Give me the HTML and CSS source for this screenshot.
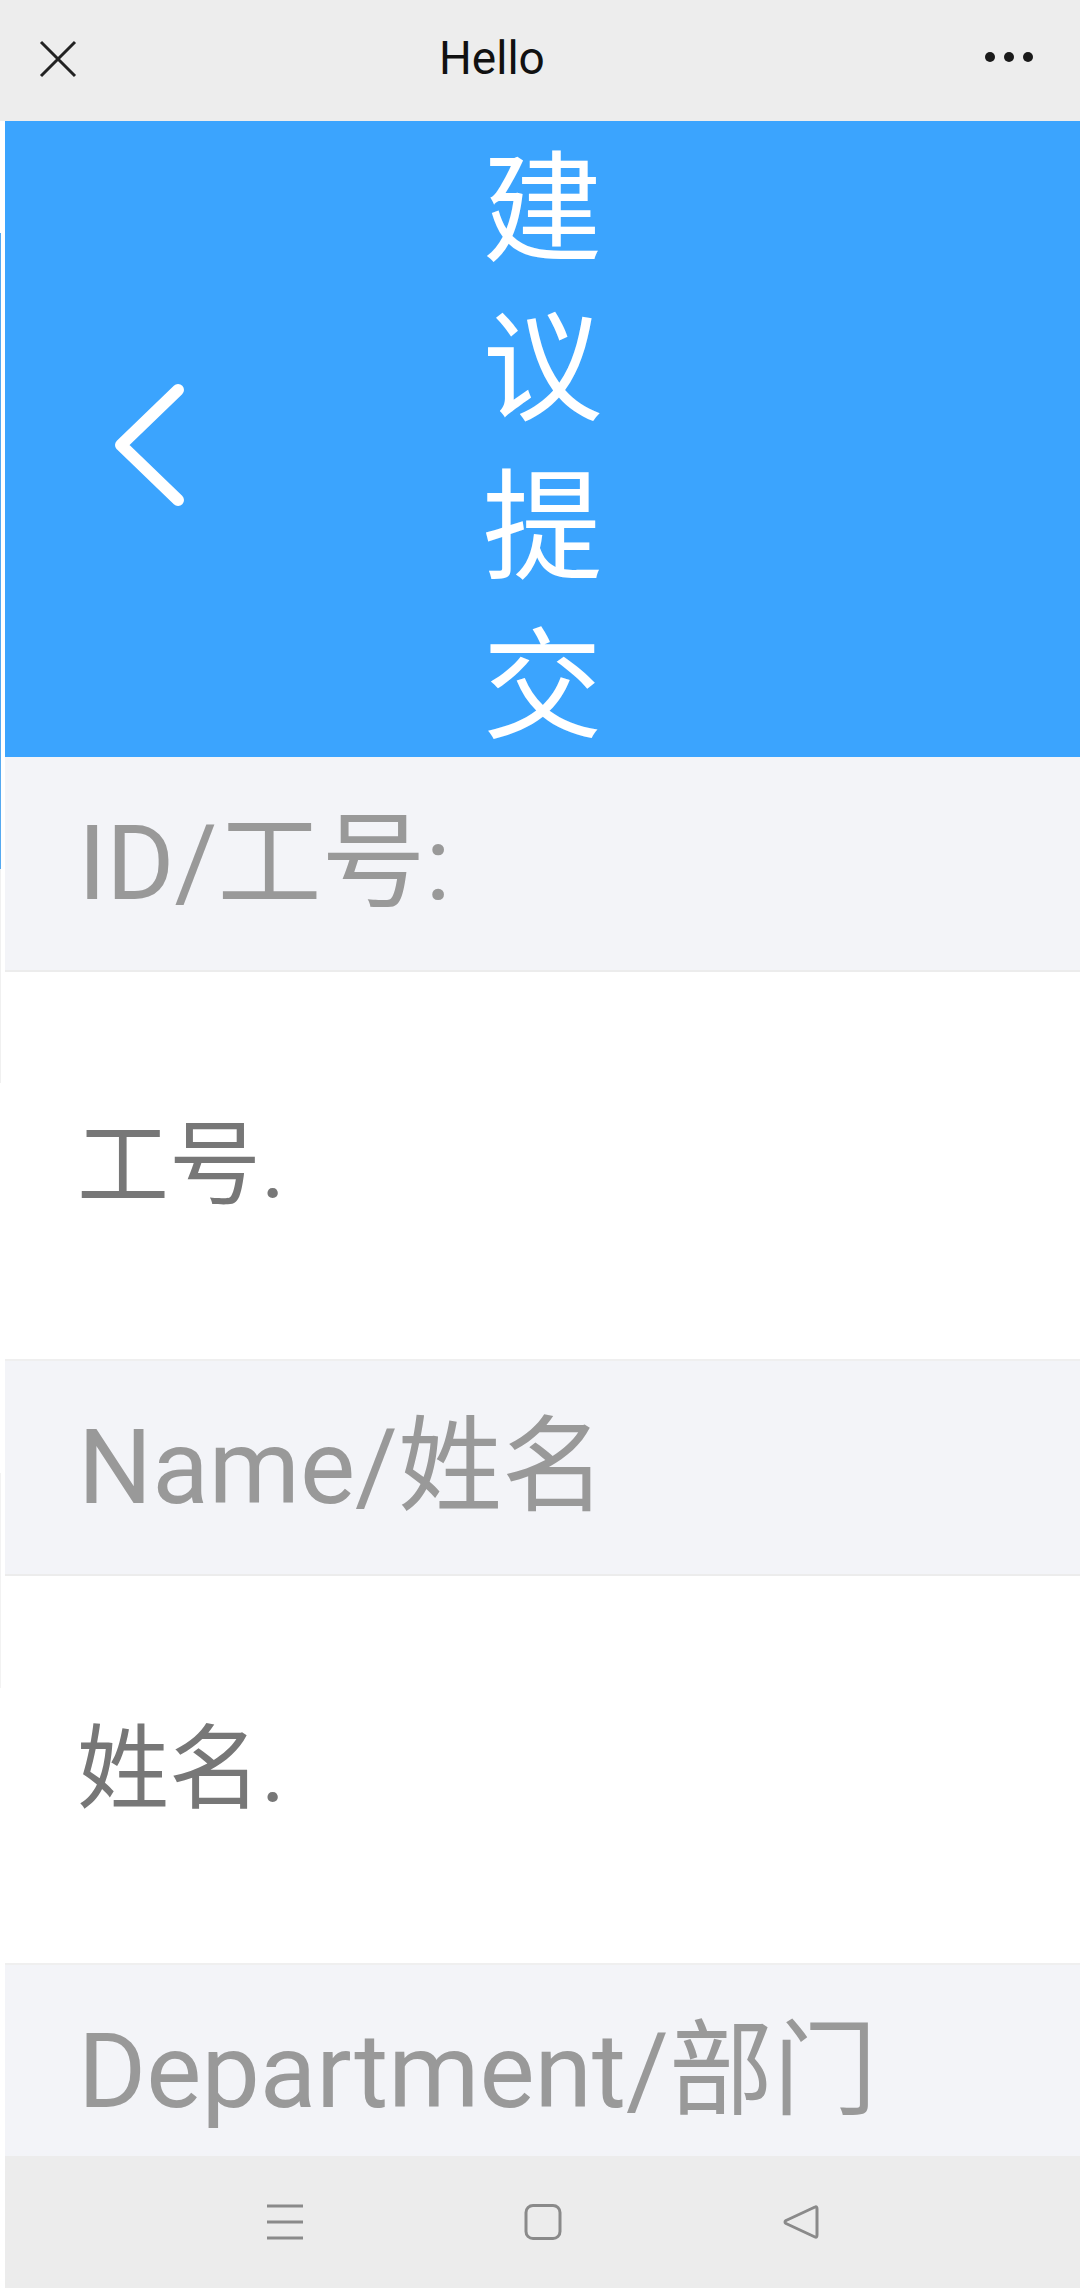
FILE: index.html
```html
<!DOCTYPE html>
<html lang="zh-CN">
<head>
  <meta charset="UTF-8">
  <meta name="viewport" content="width=device-width, initial-scale=1.0">
  <title>Hello</title>
  <link rel="stylesheet" href="styles.css">
</head>
<body>
  <div class="topbar">
    <svg class="close-icon" width="38" height="38" viewBox="0 0 38 38">
      <path d="M2 2 L36 36 M36 2 L2 36" stroke="#222" stroke-width="3" fill="none"/>
    </svg>
    <span class="topbar-title">Hello</span>
    <div class="more">
      <span></span><span></span><span></span>
    </div>
  </div>

  <div class="screen">
    <div class="gutter">
      <div class="ghost ghost-blue"></div>
      <div class="ghost ghost-grey"></div>
      <div class="ghost ghost-grey2"></div>
    </div>

    <div class="page">
      <div class="header">
        <div class="back">
          <svg width="80" height="130" viewBox="0 0 80 130">
            <polyline points="68,10 11,65 68,120" stroke="#fff" stroke-width="12" fill="none" stroke-linecap="round" stroke-linejoin="round"/>
          </svg>
        </div>
        <h1 class="title">建议提交</h1>
      </div>

      <form class="form">
        <div class="label">ID/工号:</div>
        <div class="field"><input type="text" placeholder="工号."></div>
        <div class="label">Name/姓名</div>
        <div class="field"><input type="text" placeholder="姓名."></div>
        <div class="label label-last">Department/部门</div>
      </form>

      <div class="navbar">
        <svg width="38" height="36" viewBox="0 0 38 36">
          <path d="M1 2 H37 M1 18 H37 M1 34 H37" stroke="#8a8a8a" stroke-width="3" fill="none"/>
        </svg>
        <svg width="38" height="36" viewBox="0 0 38 36">
          <rect x="2" y="1.5" width="34" height="33" rx="7" stroke="#8a8a8a" stroke-width="3" fill="none"/>
        </svg>
        <svg width="38" height="36" viewBox="0 0 38 36">
          <path d="M33 3 Q35 2 35 5 L35 31 Q35 34 33 33 L4 19.5 Q2 18 4 16.5 Z" stroke="#8a8a8a" stroke-width="3" fill="none" stroke-linejoin="round"/>
        </svg>
      </div>
    </div>
  </div>
</body>
</html>
```

FILE: styles.css
```css
body {
  margin: 0;
  padding: 0;
  width: 1080px;
  height: 2296px;
  overflow: hidden;
  background: #fff;
  font-family: Roboto, "Noto Sans CJK SC", sans-serif;
}

/* app top bar */
.topbar {
  height: 121px;
  background: #ededed;
  display: flex;
  align-items: center;
}

.close-icon {
  margin-left: 39px;
  margin-top: -4px;
}

.topbar-title {
  margin-left: 362px;
  font-size: 46px;
  line-height: 1;
  color: #111;
  margin-top: -5px;
}

.more {
  margin-left: auto;
  margin-right: 47px;
  display: flex;
  gap: 9px;
  margin-top: -8px;
}

.more span {
  width: 10px;
  height: 10px;
  border-radius: 50%;
  background: #1a1a1a;
}

.screen {
  display: flex;
}

.gutter {
  width: 5px;
  background: #fff;
  padding-top: 112px;
}

.ghost {
  width: 1px;
}

.ghost-blue {
  height: 636px;
  background: #56a9f0;
}

.ghost-grey {
  height: 214px;
  background: #f0f0f0;
}

.ghost-grey2 {
  height: 215px;
  margin-top: 390px;
  background: #f2f2f2;
}

.page {
  flex: 1;
}

/* blue header */
.header {
  height: 636px;
  background: #3ba4fe;
  display: grid;
  grid-template-columns: 1fr 120px 1fr;
}

.back {
  display: flex;
  align-items: center;
  padding-left: 105px;
  padding-top: 12px;
}

.title {
  margin: 0;
  font-family: "Noto Sans CJK SC", sans-serif;
  font-weight: normal;
  font-size: 120px;
  line-height: 159px;
  color: #fff;
  text-align: center;
}

/* form rows */
.label {
  height: 213px;
  background: #f3f4f8;
  border-bottom: 2px solid #ececec;
  display: flex;
  align-items: center;
  padding-left: 73px;
  font-size: 104px;
  line-height: 1;
  color: #999;
  white-space: nowrap;
}

.label-last {
  height: 136px;
  padding-top: 55px;
  border-bottom: none;
  align-items: flex-start;
}

.field {
  height: 387px;
  border-bottom: 2px solid #efefef;
  display: flex;
  align-items: center;
}

.field input {
  width: 100%;
  border: none;
  outline: none;
  background: transparent;
  padding: 0 0 0 72px;
  font-family: Roboto, "Noto Sans CJK SC", sans-serif;
  font-size: 92px;
  line-height: 1;
  color: #777;
}

.field input::placeholder {
  color: #777;
}

/* system navigation */
.navbar {
  height: 132px;
  background: #ececec;
  display: flex;
  align-items: center;
  justify-content: center;
  gap: 220px;
}
```
